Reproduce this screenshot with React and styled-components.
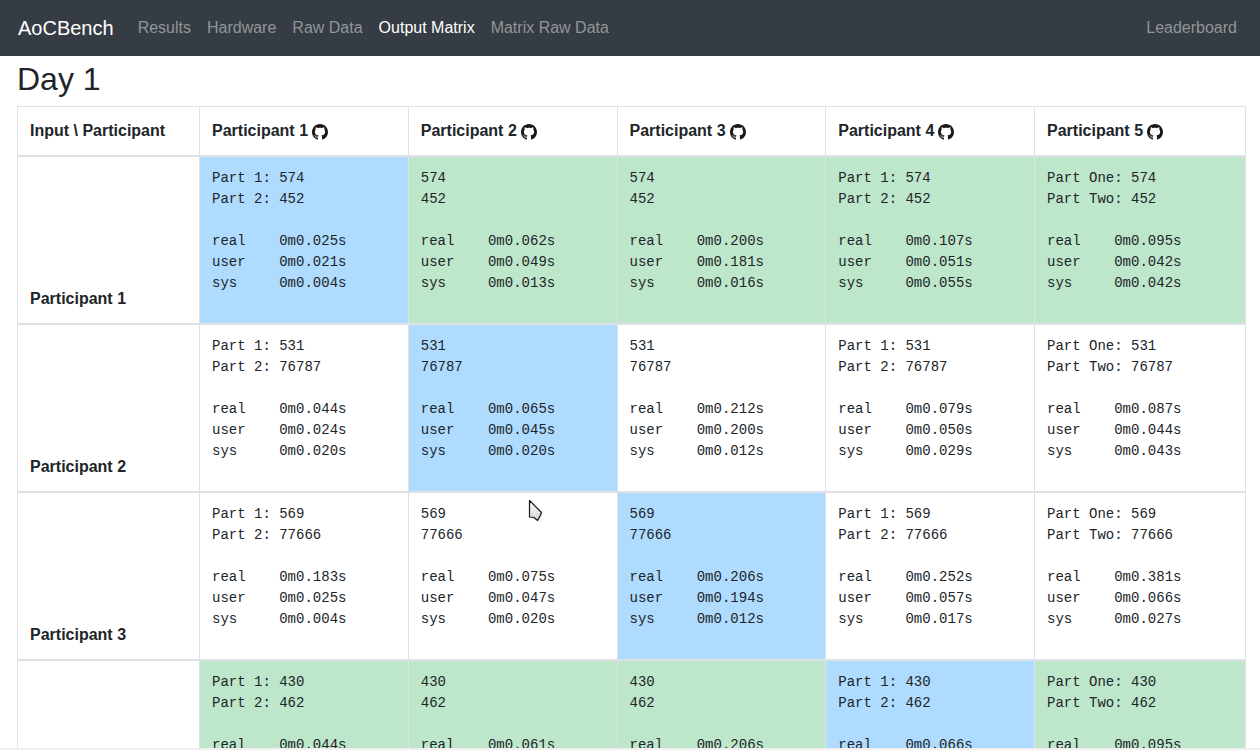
import React from "react";
import styled, { createGlobalStyle } from "styled-components";

const GlobalStyle = createGlobalStyle`
  *, *::before, *::after { box-sizing: border-box; }
  body {
    margin: 0;
    background: #fff;
    color: #212529;
    font-family: "Liberation Sans", Arial, sans-serif;
    font-size: 16px;
    line-height: 24px;
  }
`;

const Page = styled.div`
  display: flex;
  flex-direction: column;
  height: 100vh;
  position: relative;
  overflow: hidden;
`;

const Navbar = styled.nav`
  display: flex;
  align-items: center;
  flex: none;
  height: 56px;
  padding: 0 15px 0 18px;
  background: #363c43;
`;

const Brand = styled.a`
  margin-right: 16px;
  color: #fff;
  font-size: 20px;
  line-height: 30px;
  text-decoration: none;
`;

const NavList = styled.ul`
  display: flex;
  margin: 0;
  padding: 0;
  list-style: none;

  & + & { margin-left: auto; }
`;

const NavLink = styled.a`
  display: block;
  padding: 8px;
  color: ${(p) => (p.$active ? "#fff" : "#919599")};
  text-decoration: none;
`;

const Content = styled.main`
  flex: 1;
  min-height: 0;
  overflow: hidden;
  padding: 4px 14px 0 17px;
`;

const Heading = styled.h1`
  margin: 0 0 8px;
  font-size: 32px;
  font-weight: 400;
  line-height: 38px;
`;

const Matrix = styled.table`
  width: 100%;
  table-layout: fixed;
  border-collapse: collapse;
  border: 1px solid #dee2e6;
`;

const LabelColumn = styled.col`
  width: 182px;
`;

const ResultColumn = styled.col`
  width: 17%;
`;

const HeaderCell = styled.th`
  padding: 12px;
  border: 1px solid #dee2e6;
  border-bottom-width: 2px;
  text-align: left;
  vertical-align: bottom;
`;

const backgrounds = { own: "#aedbfe", match: "#bde6cb", none: "#fff" };

const ResultCell = styled.td`
  padding: 11px 12px 13px;
  border: 1px solid #dee2e6;
  border-bottom-width: 2px;
  vertical-align: top;
  background: ${(p) => backgrounds[p.$kind]};
`;

const Output = styled.pre`
  min-height: 126px;
  margin: 0 0 16px;
  font-family: "Liberation Mono", "Courier New", monospace;
  font-size: 14px;
  line-height: 21px;
`;

const RepoLink = styled.a`
  color: #1b1817;
  margin-left: 4px;

  svg {
    width: 16px;
    height: 16px;
    vertical-align: middle;
  }
`;

const BottomEdge = styled.div`
  flex: none;
  height: 2px;
  background: #f2f1f0;
`;

const Pointer = styled.svg`
  position: absolute;
  left: 528px;
  top: 499px;
  width: 16px;
  height: 24px;
  pointer-events: none;
`;

const links = ["Results", "Hardware", "Raw Data", "Output Matrix", "Matrix Raw Data"];
const participants = [1, 2, 3, 4, 5];
const prefixes = [
  ["Part 1: ", "Part 2: "],
  ["", ""],
  ["", ""],
  ["Part 1: ", "Part 2: "],
  ["Part One: ", "Part Two: "],
];

const rows = [
  {
    answers: ["574", "452"],
    matches: true,
    times: [
      ["0.025", "0.021", "0.004"],
      ["0.062", "0.049", "0.013"],
      ["0.200", "0.181", "0.016"],
      ["0.107", "0.051", "0.055"],
      ["0.095", "0.042", "0.042"],
    ],
  },
  {
    answers: ["531", "76787"],
    matches: false,
    times: [
      ["0.044", "0.024", "0.020"],
      ["0.065", "0.045", "0.020"],
      ["0.212", "0.200", "0.012"],
      ["0.079", "0.050", "0.029"],
      ["0.087", "0.044", "0.043"],
    ],
  },
  {
    answers: ["569", "77666"],
    matches: false,
    times: [
      ["0.183", "0.025", "0.004"],
      ["0.075", "0.047", "0.020"],
      ["0.206", "0.194", "0.012"],
      ["0.252", "0.057", "0.017"],
      ["0.381", "0.066", "0.027"],
    ],
  },
  {
    answers: ["430", "462"],
    matches: true,
    times: [["0.044"], ["0.061"], ["0.206"], ["0.066"], ["0.095"]],
  },
];

const timers = ["real", "user", "sys"];

function formatOutput(row, column) {
  const answers = row.answers.map((answer, i) => prefixes[column][i] + answer);
  const times = row.times[column].map((time, i) => `${timers[i]}\t0m${time}s`);
  return [...answers, "", ...times].join("\n");
}

function cellKind(row, rowIndex, column) {
  if (rowIndex === column) return "own";
  return row.matches ? "match" : "none";
}

function GithubMark() {
  return (
    <svg viewBox="3.6 5.1 120.8 120.8" fill="currentColor" aria-hidden="true">
      <path d="M64 5.103c-33.347 0-60.388 27.035-60.388 60.388 0 26.682 17.303 49.317 41.297 57.303 3.017.56 4.125-1.31 4.125-2.905 0-1.44-.056-6.197-.082-11.243-16.8 3.653-20.345-7.125-20.345-7.125-2.747-6.98-6.705-8.836-6.705-8.836-5.48-3.748.413-3.67.413-3.67 6.063.425 9.257 6.223 9.257 6.223 5.386 9.23 14.127 6.562 17.573 5.02.542-3.903 2.107-6.568 3.834-8.076-13.413-1.525-27.514-6.704-27.514-29.843 0-6.593 2.36-11.98 6.223-16.21-.628-1.52-2.695-7.662.584-15.98 0 0 5.07-1.623 16.61 6.19C53.7 35 58.867 34.327 64 34.304c5.13.023 10.3.694 15.127 2.033 11.526-7.813 16.59-6.19 16.59-6.19 3.287 8.317 1.22 14.46.593 15.98 3.872 4.23 6.215 9.617 6.215 16.21 0 23.194-14.127 28.3-27.574 29.796 2.167 1.874 4.097 5.55 4.097 11.183 0 8.08-.07 14.583-.07 16.572 0 1.607 1.088 3.49 4.148 2.897 23.98-7.994 41.263-30.622 41.263-57.294C124.388 32.14 97.35 5.104 64 5.104z" />
      <path d="M22 90l4 1 1 3-3-1zM28 96l4 3-1 3-4-4zM34 105l5 2 0 3-5-2zM42 108l5 0 0 3-5 0z" />
    </svg>
  );
}

export default function App() {
  return (
    <Page>
      <GlobalStyle />
      <Navbar>
        <Brand href="#home">AoCBench</Brand>
        <NavList>
          {links.map((label) => (
            <li key={label}>
              <NavLink href="#nav" $active={label === "Output Matrix"}>{label}</NavLink>
            </li>
          ))}
        </NavList>
        <NavList>
          <li><NavLink href="#leaderboard">Leaderboard</NavLink></li>
        </NavList>
      </Navbar>
      <Content>
        <Heading>Day 1</Heading>
        <Matrix>
          <colgroup>
            <LabelColumn />
            <ResultColumn span={4} />
            <col />
          </colgroup>
          <thead>
            <tr>
              <HeaderCell scope="col">Input \ Participant</HeaderCell>
              {participants.map((n) => (
                <HeaderCell key={n} scope="col">
                  Participant {n}
                  <RepoLink href="#repo" aria-label={`Participant ${n} on GitHub`}>
                    <GithubMark />
                  </RepoLink>
                </HeaderCell>
              ))}
            </tr>
          </thead>
          <tbody>
            {rows.map((row, r) => (
              <tr key={r}>
                <HeaderCell scope="row">Participant {r + 1}</HeaderCell>
                {participants.map((n, c) => (
                  <ResultCell key={n} $kind={cellKind(row, r, c)}>
                    <Output>{formatOutput(row, c)}</Output>
                  </ResultCell>
                ))}
              </tr>
            ))}
          </tbody>
        </Matrix>
      </Content>
      <BottomEdge />
      <Pointer viewBox="0 0 16 24" aria-hidden="true">
        <defs>
          <linearGradient id="pointer-fill" x1="0" y1="0" x2="0" y2="1">
            <stop offset="0" stopColor="#fff" />
            <stop offset="1" stopColor="#d4d4d4" />
          </linearGradient>
        </defs>
        <path d="M2.5 3 14.5 15 11 22.5 7.5 19.5 2.5 19.5Z" fill="#000" opacity="0.12" />
        <path
          d="M1.5 1.5 13.5 13.5 12 17 9.5 21.5 6 18.5 1.5 18Z"
          fill="url(#pointer-fill)"
          stroke="#1a1a1a"
          strokeWidth="1.2"
          strokeLinejoin="round"
        />
      </Pointer>
    </Page>
  );
}
